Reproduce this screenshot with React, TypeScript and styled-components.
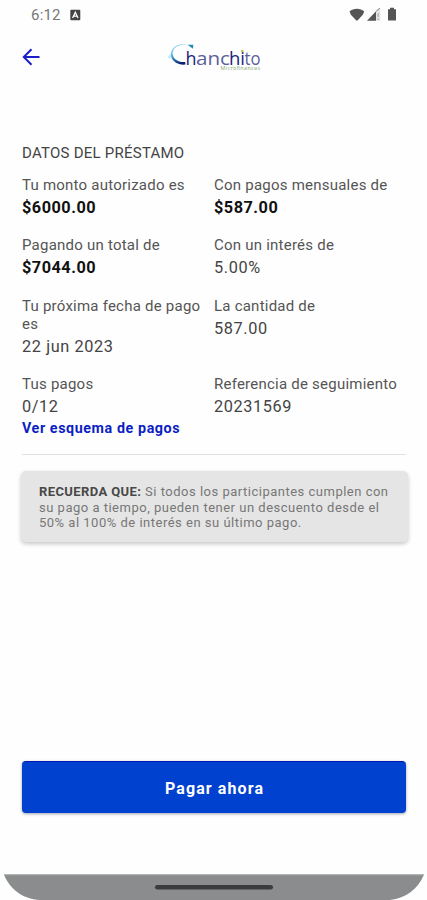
import React from "react";
import styled, { createGlobalStyle } from "styled-components";

const GlobalStyle = createGlobalStyle`
  * { box-sizing: border-box; }
  body { margin: 0; background: #fefefe; font-family: Roboto, sans-serif; }
`;

const Screen = styled.div`
  width: 427px;
  height: 900px;
  display: flex;
  flex-direction: column;
  overflow: hidden;
  background: #fefefe;
`;

const StatusBar = styled.div`
  height: 30px;
  padding: 0 29px 0 31px;
  display: flex;
  align-items: center;
  justify-content: space-between;
`;

const StatusGroup = styled.div`
  display: flex;
  align-items: center;
  gap: 9px;
`;

const Clock = styled.span`
  font-size: 15px;
  line-height: 30px;
  letter-spacing: 0.2px;
  color: #777;
`;

const Header = styled.header`
  height: 54px;
  display: flex;
  align-items: center;
  padding-left: 20px;
`;

const BackButton = styled.button`
  border: 0;
  padding: 0;
  background: none;
  display: flex;
  width: 22px;
  height: 22px;
`;

const Brand = styled.svg`
  margin-left: 123px;
`;

const Main = styled.main`
  flex: 1;
  display: flex;
  flex-direction: column;
  padding: 59px 21px 0 22px;
`;

const Title = styled.h1`
  margin: 0 0 12.6px;
  font-size: 15px;
  font-weight: 400;
  line-height: 20px;
  letter-spacing: 0.24px;
  color: #444;
`;

const Details = styled.div`
  display: grid;
  grid-template-columns: 192px 192px;
  row-gap: 15.5px;
`;

const Label = styled.div`
  font-size: 15px;
  line-height: 18px;
  letter-spacing: 0.23px;
  color: #555;
`;

const Value = styled.div<{ $strong?: boolean }>`
  padding-top: 1px;
  font-size: 16.3px;
  line-height: 26px;
  letter-spacing: ${(p) => (p.$strong ? "0.5px" : "0.6px")};
  font-weight: ${(p) => (p.$strong ? 700 : 400)};
  color: ${(p) => (p.$strong ? "#111" : "#444")};
`;

const ScheduleLink = styled.a`
  display: block;
  margin-top: -1px;
  font-size: 14.3px;
  font-weight: 700;
  line-height: 18px;
  letter-spacing: 0.58px;
  color: #0c1fc4;
`;

const Divider = styled.hr`
  width: 384px;
  height: 1px;
  border: 0;
  margin: 17px 0 16px;
  background: #e2e2e2;
`;

const Notice = styled.p`
  margin: 0 0 0 -1px;
  width: 387px;
  height: 71px;
  padding: 13px 0 0 18px;
  border-radius: 5px;
  background: #e5e5e5;
  box-shadow: 0 2px 4px rgba(0, 0, 0, 0.22);
  font-size: 13px;
  line-height: 15.4px;
  letter-spacing: 0.5px;
  color: #777;
`;

const NoticeLine = styled.span`
  display: block;
  white-space: nowrap;
`;

const NoticeLead = styled.strong`
  font-weight: 700;
  color: #484848;
  letter-spacing: 0.4px;
`;

const PayButton = styled.button`
  width: 384px;
  height: 52px;
  margin: auto 0 61px;
  padding: 2px 0 0 1px;
  border: 0;
  border-top: 1px solid #0018b4;
  border-radius: 4px;
  background: #0041cf;
  box-shadow: 0 1px 3px rgba(20, 20, 60, 0.4);
  color: #fff;
  font-family: inherit;
  font-size: 16px;
  font-weight: 700;
  letter-spacing: 1.1px;
`;

const NavigationBar = styled.div`
  display: flex;
  height: 26px;
`;

interface DetailItem {
  label: string;
  value: string;
  strong?: boolean;
  link?: string;
}

const details: DetailItem[] = [
  { label: "Tu monto autorizado es", value: "$6000.00", strong: true },
  { label: "Con pagos mensuales de", value: "$587.00", strong: true },
  { label: "Pagando un total de", value: "$7044.00", strong: true },
  { label: "Con un interés de", value: "5.00%" },
  { label: "Tu próxima fecha de pago es", value: "22 jun 2023" },
  { label: "La cantidad de", value: "587.00" },
  { label: "Tus pagos", value: "0/12", link: "Ver esquema de pagos" },
  { label: "Referencia de seguimiento", value: "20231569" },
];

const KeyboardIcon = () => (
  <svg width="11" height="12" viewBox="0 0 11 12">
    <rect x="0.3" y="0.7" width="10" height="10.6" rx="1" fill="#444" />
    <path d="M2.6 9 5.3 3.2 8 9M3.6 7.2H7" fill="none" stroke="#fff" strokeWidth="1.3" />
  </svg>
);

const StatusIcons = () => (
  <svg width="50" height="16" viewBox="0 0 50 16">
    <path d="M1.5 4.4C5.5 .8 12.2 .8 16.2 4.4L14.8 7.7 9.5 13.4 8.3 13.4 2.9 7.7Z" fill="#555" />
    <path d="M19 13.7 28 4.3V13.7Z" fill="#555" />
    <path d="M28 4.3 32.3 1V13.7H28Z" fill="#e4e4e4" />
    <path d="M28.2 4.2 31.8 1.2" stroke="#777" strokeWidth="1" />
    <path d="M30.2 6V10M30.2 11.5V13" stroke="#aaa" strokeWidth="1.2" />
    <path d="M40 2.2H42V.8H46V2.2H48V13.6H40Z" fill="#555" />
  </svg>
);

const Logo = () => (
  <Brand width="100" height="34" viewBox="0 0 100 34" aria-label="Chanchito Microfinanzas">
    <defs>
      <linearGradient id="swoosh" x1="0" y1="0" x2="0.4" y2="1">
        <stop offset="0" stopColor="#c5eaf8" />
        <stop offset="0.5" stopColor="#4aabdc" />
        <stop offset="1" stopColor="#08246e" />
      </linearGradient>
    </defs>
    <path d="M23 5.5C15 1.8 7 6 5.9 13.5 5.3 20.6 12.5 25.4 20.5 24.6L20.2 22C14 22.8 8 19.5 7.6 13.8 7.6 7.4 15 3.1 23 5.5Z" fill="url(#swoosh)" />
    <path d="M22.5 4.8 28.3 4.8 28 8.8 25.5 7Z" fill="#2489b9" />
    <path d="M2.5 17.5 6.5 12 5.6 19Z" fill="#c5ebf7" />
    <text y="24.5" fontFamily="Open Sans, sans-serif" fontSize="19" fill="#5c619b">
      <tspan x="20.5" textLength="11" lengthAdjust="spacingAndGlyphs" fill="#18217b">h</tspan>
      <tspan x="31" textLength="34" lengthAdjust="spacingAndGlyphs">anc</tspan>
      <tspan x="64" textLength="16" lengthAdjust="spacingAndGlyphs" fill="#18217b">hi</tspan>
      <tspan x="79.5" textLength="16" lengthAdjust="spacingAndGlyphs">to</tspan>
    </text>
    <circle cx="77.3" cy="11" r="1.2" fill="#a8c437" />
    <text x="55.5" y="30" fontFamily="Open Sans, sans-serif" fontSize="5.4" textLength="39.5" fill="#7faa72">Microfinanzas</text>
  </Brand>
);

export default function App() {
  return (
    <>
      <GlobalStyle />
      <Screen>
        <StatusBar>
          <StatusGroup>
            <Clock>6:12</Clock>
            <KeyboardIcon />
          </StatusGroup>
          <StatusIcons />
        </StatusBar>
        <Header>
          <BackButton aria-label="Volver">
            <svg width="22" height="22" viewBox="0 0 22 22" fill="none" stroke="#1a1fc8" strokeWidth="2">
              <path d="M19.5 11H4M11.5 3.3 3.8 11 11.5 18.7" />
            </svg>
          </BackButton>
          <Logo />
        </Header>
        <Main>
          <Title>DATOS DEL PRÉSTAMO</Title>
          <Details>
            {details.map((item) => (
              <div key={item.label}>
                <Label>{item.label}</Label>
                <Value $strong={item.strong}>{item.value}</Value>
                {item.link && <ScheduleLink>{item.link}</ScheduleLink>}
              </div>
            ))}
          </Details>
          <Divider />
          <Notice>
            <NoticeLine>
              <NoticeLead>RECUERDA QUE:</NoticeLead> Si todos los participantes cumplen con
            </NoticeLine>
            <NoticeLine>su pago a tiempo, pueden tener un descuento desde el</NoticeLine>
            <NoticeLine>50% al 100% de interés en su último pago.</NoticeLine>
          </Notice>
          <PayButton>Pagar ahora</PayButton>
        </Main>
        <NavigationBar>
          <svg width="427" height="26" viewBox="0 0 427 26">
            <path d="M4 .4H424C418 15 406 24 390 26H40C22 25 9 14 4 .4Z" fill="#8a8c8d" />
            <path d="M4 .8H424" stroke="#a9b0ac" strokeWidth="1" />
            <rect x="155" y="11" width="118" height="4.6" rx="2.3" fill="#3b3c3e" />
          </svg>
        </NavigationBar>
      </Screen>
    </>
  );
}
